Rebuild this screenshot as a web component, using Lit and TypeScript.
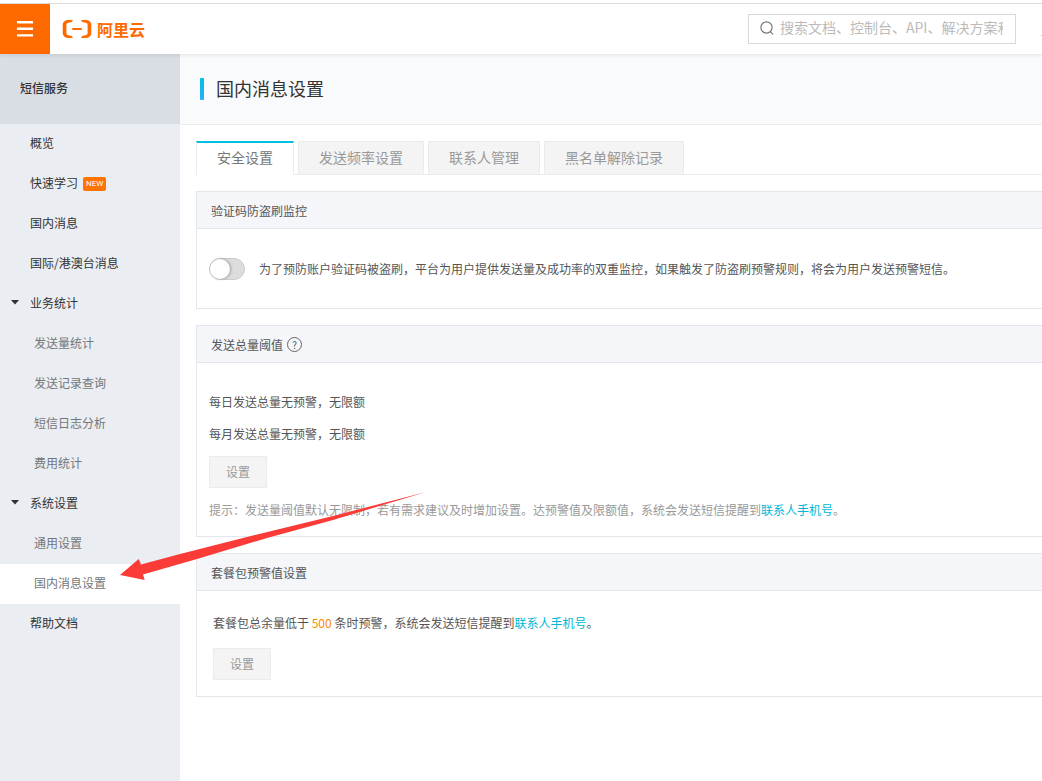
import { LitElement, html, css } from "lit";
import { customElement, property, state } from "lit/decorators.js";
import { classMap } from "lit/directives/class-map.js";

interface NavEntry {
  label: string;
  badge?: string;
  active?: boolean;
  children?: NavEntry[];
}

const NAV: NavEntry[] = [
  { label: "概览" },
  { label: "快速学习", badge: "NEW" },
  { label: "国内消息" },
  { label: "国际/港澳台消息" },
  {
    label: "业务统计",
    children: [
      { label: "发送量统计" },
      { label: "发送记录查询" },
      { label: "短信日志分析" },
      { label: "费用统计" },
    ],
  },
  {
    label: "系统设置",
    children: [{ label: "通用设置" }, { label: "国内消息设置", active: true }],
  },
  { label: "帮助文档" },
];

const TABS = ["安全设置", "发送频率设置", "联系人管理", "黑名单解除记录"];

const reset = css`
  * {
    box-sizing: border-box;
  }
  a {
    color: inherit;
    text-decoration: none;
  }
  button,
  input {
    font: inherit;
    margin: 0;
  }
  button {
    cursor: pointer;
  }
`;

@customElement("top-bar")
export class TopBar extends LitElement {
  static styles = [
    reset,
    css`
      :host {
        display: block;
        position: relative;
        z-index: 2;
      }
      .wrap {
        background: #fff;
        padding-top: 3px;
        box-shadow: 0 1px 4px rgba(0, 0, 0, 0.1);
      }
      .bar {
        display: flex;
        align-items: center;
        height: 51px;
        border-top: 1px solid #dcdcdc;
        overflow: hidden;
      }
      .menu {
        display: grid;
        place-items: center;
        flex: none;
        width: 50px;
        height: 50px;
        padding: 0;
        border: 0;
        background: #ff6a00;
      }
      .logo {
        display: flex;
        align-items: center;
        gap: 5px;
        margin-left: 12px;
        color: #ff6a00;
        font-size: 16px;
        font-weight: 700;
        line-height: 24px;
        white-space: nowrap;
      }
      .search {
        display: flex;
        align-items: center;
        gap: 6px;
        width: 268px;
        height: 30px;
        margin-left: auto;
        padding: 0 12px 2px 11px;
        border: 1px solid #d9d9d9;
      }
      .search svg {
        flex: none;
      }
      .search input {
        flex: 1;
        min-width: 0;
        height: 26px;
        padding: 0 0 2px;
        border: 0;
        outline: 0;
        background: transparent;
        font-size: 14px;
        color: #333;
      }
      .search input::placeholder {
        color: #bbb;
        opacity: 1;
      }
      .links {
        flex: none;
        width: 26px;
        padding-left: 25px;
        overflow: hidden;
        white-space: nowrap;
        font-size: 12px;
        color: #333;
      }
    `,
  ];

  render() {
    return html`
      <header class="wrap">
        <div class="bar">
          <button class="menu" aria-label="菜单">
            <svg width="16" height="16" viewBox="0 0 16 16" fill="#fff">
              <path d="M0 0h16v2.4H0zM0 6.6h16v2.4H0zM0 13.2h16v2.4H0z" />
            </svg>
          </button>
          <a class="logo" href="#">
            <svg width="30" height="20" viewBox="0 0 30 20" fill="#ff6a00">
              <path
                d="M11 1H5.500A5 5 0 0 0 .7 6v8a5 5 0 0 0 4.800 5H11l-1.300-2-4-1.100a1.700 1.700 0 0 1-1.300-1.700V5.800a1.700 1.700 0 0 1 1.300-1.700l4-1.100z"
              />
              <path
                d="M19 1h5.500a5 5 0 0 1 4.800 5v8a5 5 0 0 1-4.800 5H19l1.300-2 4-1.100a1.700 1.700 0 0 0 1.300-1.700V5.800a1.700 1.700 0 0 0-1.300-1.700l-4-1.100z"
              />
              <path d="M10.300 9h9.400v2h-9.400z" />
            </svg>
            阿里云
          </a>
          <label class="search">
            <svg
              width="14"
              height="14"
              viewBox="0 0 14 14"
              fill="none"
              stroke="#777"
              stroke-width="1.2"
            >
              <circle cx="6.500" cy="6.500" r="5.600" />
              <path d="M10.200 10.600 13 13.400" />
            </svg>
            <input
              type="text"
              aria-label="搜索"
              placeholder="搜索文档、控制台、API、解决方案和资源"
            />
          </label>
          <a class="links" href="#">费用</a>
        </div>
      </header>
    `;
  }
}

@customElement("side-nav")
export class SideNav extends LitElement {
  @state() private closed: string[] = [];

  static styles = [
    reset,
    css`
      :host {
        display: block;
        background: #eaedf1;
        color: #333;
      }
      .title {
        height: 70px;
        margin: 0;
        padding: 0 20px;
        background: #d9dde4;
        font-size: 12px;
        font-weight: 500;
        line-height: 68px;
      }
      .item,
      .group {
        display: flex;
        align-items: center;
        width: 100%;
        height: 40px;
        padding: 0 0 3px 30px;
        font-size: 12px;
        white-space: nowrap;
      }
      .group {
        gap: 11px;
        padding-left: 11px;
        border: 0;
        background: none;
        color: inherit;
      }
      .sub {
        padding-left: 34px;
        color: #73777a;
      }
      .active {
        background: #fff;
      }
      .badge {
        margin: 3px 0 0 5px;
        padding: 0 3px;
        border-radius: 2px;
        background: #ff7300;
        color: #fff;
        font: 400 8px/14px Roboto, sans-serif;
      }
    `,
  ];

  private toggle(label: string) {
    this.closed = this.closed.includes(label)
      ? this.closed.filter((l) => l !== label)
      : [...this.closed, label];
  }

  private link(e: NavEntry, sub = false) {
    return html`<a
      class=${classMap({ item: true, sub, active: !!e.active })}
      href="#"
      >${e.label}${e.badge ? html`<span class="badge">${e.badge}</span>` : ""}</a
    >`;
  }

  render() {
    return html`
      <h2 class="title">短信服务</h2>
      <nav>
        ${NAV.map((e) =>
          e.children
            ? html`
                <button class="group" @click=${() => this.toggle(e.label)}>
                  <svg width="8" height="5" viewBox="0 0 8 5" fill="#333">
                    <path d="M0 0h8L4 4.600z" />
                  </svg>
                  ${e.label}
                </button>
                ${this.closed.includes(e.label)
                  ? ""
                  : e.children.map((c) => this.link(c, true))}
              `
            : this.link(e)
        )}
      </nav>
    `;
  }
}

@customElement("settings-panel")
export class SettingsPanel extends LitElement {
  @property() heading = "";
  @property({ type: Boolean }) help = false;

  static styles = [
    reset,
    css`
      :host {
        display: block;
        border: 1px solid #e3e7ec;
        border-right: 0;
      }
      .head {
        display: flex;
        align-items: center;
        gap: 4px;
        height: 37px;
        padding: 0 14px;
        border-bottom: 1px solid #e3e7ec;
        background: #f4f6fa;
        color: #555;
      }
      .title {
        margin: 0;
        font-size: 12px;
        font-weight: 400;
      }
      .help {
        display: flex;
        padding: 0;
        border: 0;
        background: none;
      }
      .question {
        display: grid;
        place-items: center;
        width: 15px;
        height: 15px;
        border: 1px solid #666;
        border-radius: 50%;
        font-size: 10px;
        line-height: 13px;
        color: #555;
      }
    `,
  ];

  render() {
    return html`
      <section>
        <div class="head">
          <h3 class="title">${this.heading}</h3>
          ${this.help
            ? html`<button class="help" aria-label="帮助">
                <span class="question">?</span>
              </button>`
            : ""}
        </div>
        <slot></slot>
      </section>
    `;
  }
}

@customElement("app-root")
export class AppRoot extends LitElement {
  @state() private tab = 0;

  static styles = [
    reset,
    css`
      :host {
        display: flex;
        flex-direction: column;
        position: relative;
        min-height: 100vh;
        overflow: hidden;
        background: #fff;
        color: #555;
        font-family: "Noto Sans CJK SC", sans-serif;
        font-size: 12px;
      }
      .layout {
        display: grid;
        grid-template-columns: 180px minmax(0, 1fr);
        flex: 1;
      }
      .page-head {
        display: flex;
        align-items: center;
        gap: 12px;
        height: 71px;
        padding: 0 20px;
        border-bottom: 1px solid #ebecec;
        background: #f9fafc;
      }
      .accent {
        width: 4px;
        height: 22px;
        border-radius: 1px;
        background: linear-gradient(#00c1de, #2ea9f7);
      }
      .page-title {
        margin: 0;
        padding-bottom: 3px;
        color: #333;
        font-size: 18px;
        font-weight: 400;
        line-height: 26px;
      }
      .body {
        display: flex;
        flex-direction: column;
        gap: 16px;
        padding: 16px 0 16px 16px;
      }
      .tabs {
        display: flex;
        gap: 4px;
        height: 34px;
        border-bottom: 1px solid #ebecec;
      }
      .tab {
        height: 33px;
        padding: 0 20px 2px;
        border: 1px solid #ebecec;
        border-bottom: 0;
        background: #f4f4f4;
        color: #999;
        font-size: 14px;
        white-space: nowrap;
      }
      .tab.current {
        height: 34px;
        padding-bottom: 4px;
        border-top: 2px solid #00c1de;
        background: #fff;
        color: #777;
      }
      .monitor {
        display: flex;
        align-items: center;
        gap: 14px;
        padding: 29px 12px 28px;
      }
      .switch {
        appearance: none;
        flex: none;
        display: flex;
        width: 36px;
        height: 22px;
        border: 1px solid #ccc;
        border-radius: 11px;
        background: #ddd;
        cursor: pointer;
      }
      .switch::before {
        content: "";
        width: 20px;
        height: 20px;
        border-radius: 50%;
        background: #fff;
        box-shadow: 1px 0 3px rgba(0, 0, 0, 0.3);
      }
      .switch:checked {
        justify-content: flex-end;
        background: #00c1de;
      }
      .monitor label {
        padding-bottom: 1px;
      }
      p {
        margin: 0;
        line-height: 32px;
      }
      .limits {
        padding: 23px 12px 10px;
      }
      .limits .btn {
        margin: 6px 0;
      }
      .package {
        padding: 16px;
      }
      .package .btn {
        margin-top: 9px;
      }
      .btn {
        display: block;
        width: 58px;
        height: 32px;
        padding: 0 0 2px;
        border: 1px solid #ebecec;
        background: #f4f4f4;
        color: #999;
        font-size: 12px;
      }
      .tip {
        color: #999;
      }
      .link {
        color: #00b7d8;
      }
      .count {
        color: #ff8a00;
      }
      .pointer {
        position: absolute;
        z-index: 3;
        left: 120px;
        top: 492px;
        pointer-events: none;
      }
    `,
  ];

  render() {
    return html`
      <top-bar></top-bar>
      <div class="layout">
        <side-nav></side-nav>
        <main>
          <div class="page-head">
            <span class="accent"></span>
            <h1 class="page-title">国内消息设置</h1>
          </div>
          <div class="body">
            <div class="tabs" role="tablist">
              ${TABS.map(
                (t, i) => html`<button
                  role="tab"
                  aria-selected=${i === this.tab}
                  class=${classMap({ tab: true, current: i === this.tab })}
                  @click=${() => (this.tab = i)}
                >
                  ${t}
                </button>`
              )}
            </div>
            <settings-panel heading="验证码防盗刷监控">
              <div class="monitor">
                <input class="switch" type="checkbox" role="switch" id="monitor" />
                <label for="monitor"
                  >为了预防账户验证码被盗刷，平台为用户提供发送量及成功率的双重监控，如果触发了防盗刷预警规则，将会为用户发送预警短信。</label
                >
              </div>
            </settings-panel>
            <settings-panel heading="发送总量阈值" help>
              <div class="limits">
                <p>每日发送总量无预警，无限额</p>
                <p>每月发送总量无预警，无限额</p>
                <button class="btn">设置</button>
                <p class="tip">
                  提示：发送量阈值默认无限制，若有需求建议及时增加设置。达预警值及限额值，系统会发送短信提醒到<a
                    class="link"
                    href="#"
                    >联系人手机号</a
                  >。
                </p>
              </div>
            </settings-panel>
            <settings-panel heading="套餐包预警值设置">
              <div class="package">
                <p>
                  套餐包总余量低于 <span class="count">500</span>
                  条时预警，系统会发送短信提醒到<a class="link" href="#"
                    >联系人手机号</a
                  >。
                </p>
                <button class="btn">设置</button>
              </div>
            </settings-panel>
          </div>
        </main>
      </div>
      <svg class="pointer" width="308" height="90" viewBox="0 0 308 90">
        <path
          fill="#fb3b38"
          d="M0 83 18.700 67 21 72.500 60 62 123 46 213 24 306 0 213 28 147 46 77 67 23 82.500 24.700 88z"
        />
      </svg>
    `;
  }
}
